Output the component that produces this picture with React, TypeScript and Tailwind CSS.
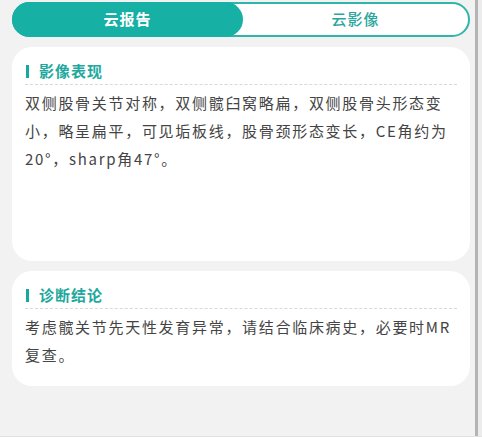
const sections = [
  {
    title: "影像表现",
    body: "双侧股骨关节对称，双侧髋臼窝略扁，双侧股骨头形态变小，略呈扁平，可见垢板线，股骨颈形态变长，CE角约为20°，sharp角47°。",
    height: "h-[214px]",
  },
  {
    title: "诊断结论",
    body: "考虑髋关节先天性发育异常，请结合临床病史，必要时MR复查。",
    height: "",
  },
];

const App = () => {
  return (
    <div
      className="flex h-[437px] w-[482px] bg-[#f2f2f2] border-b border-b-[#e2e2e2]"
      style={{ fontFamily: '"Noto Sans CJK SC", "Noto Sans", sans-serif' }}
    >
      <div className="flex-1 flex flex-col pl-3 pr-[5px] pt-[2px] gap-[10px]">
        <div className="flex h-[35px] rounded-full border-2 border-[#2fb5aa] bg-white">
          <button className="w-[231px] -ml-[2px] -my-[2px] rounded-full bg-[#16b0a5] text-white text-[15px] font-bold tracking-[1px]">
            云报告
          </button>
          <button className="flex-1 text-[#2aa79d] text-[15px] font-medium tracking-[1px]">
            云影像
          </button>
        </div>
        {sections.map((s) => (
          <div
            key={s.title}
            className={`bg-white rounded-[20px] px-[13px] pt-[13px] pb-[17px] ${s.height}`}
          >
            <div className="flex items-center gap-[10px] pl-[1px] h-[22px]">
              <span className="w-[3px] h-[13px] bg-[#17a99e]" />
              <h2 className="text-[15px] font-bold text-[#1ea89e] tracking-[1px]">
                {s.title}
              </h2>
            </div>
            <div className="mt-[2px] border-t border-dashed border-t-[#d8d8d8]" />
            <p className="mt-[4px] text-[15px] leading-[28px] text-[#444] tracking-[1.7px]">
              {s.body}
            </p>
          </div>
        ))}
      </div>
      <div className="w-[7px] flex">
        <div className="w-[3px] bg-[#b4b4b4]" />
        <div className="flex-1 bg-[#ececec]" />
      </div>
    </div>
  );
};

export default App;
